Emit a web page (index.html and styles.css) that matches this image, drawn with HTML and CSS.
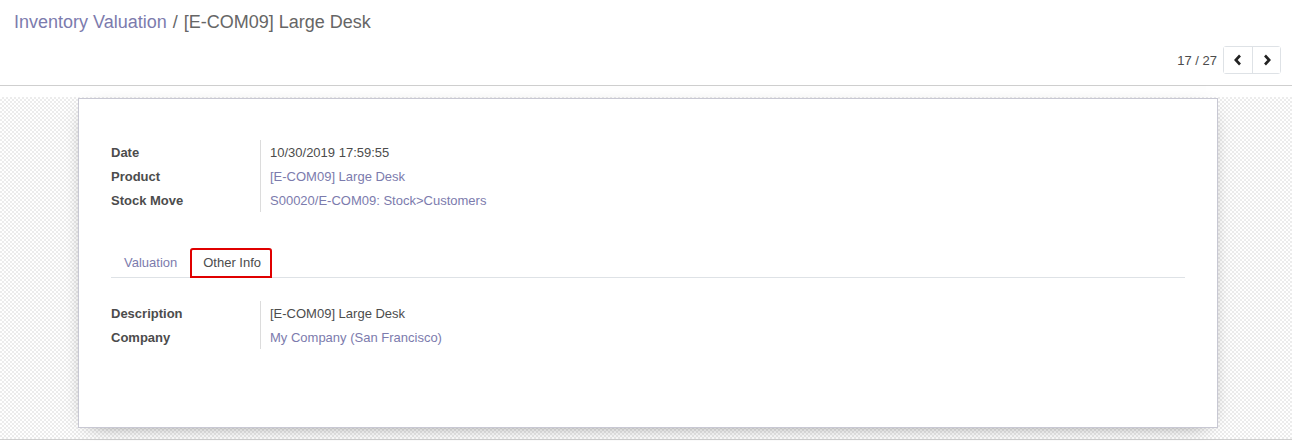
FILE: index.html
```html
<!DOCTYPE html>
<html>
<head>
<meta charset="utf-8">
<link rel="stylesheet" href="styles.css">
</head>
<body>
<div class="control-panel">
  <div class="breadcrumb">
    <a class="crumb-link">Inventory Valuation</a>
    <span class="crumb-sep">/</span>
    <span class="crumb-active">[E-COM09] Large Desk</span>
  </div>
  <div class="cp-bottom">
    <div class="pager">
      <span class="pager-value">17 / 27</span>
      <div class="pager-buttons">
        <button class="pager-btn" aria-label="Previous">
          <svg width="10" height="12" viewBox="0 0 10 12"><path d="M7 1.5 L2.8 6 L7 10.5" fill="none" stroke="#222" stroke-width="2.6" stroke-linejoin="miter"/></svg>
        </button>
        <button class="pager-btn" aria-label="Next">
          <svg width="10" height="12" viewBox="0 0 10 12"><path d="M3 1.5 L7.2 6 L3 10.5" fill="none" stroke="#222" stroke-width="2.6" stroke-linejoin="miter"/></svg>
        </button>
      </div>
    </div>
  </div>
</div>
<div class="spacer"></div>
<div class="sheet-bg">
  <div class="sheet">
    <div class="group">
      <div class="row"><div class="label">Date</div><div class="value">10/30/2019 17:59:55</div></div>
      <div class="row"><div class="label">Product</div><div class="value link">[E-COM09] Large Desk</div></div>
      <div class="row"><div class="label">Stock Move</div><div class="value link">S00020/E-COM09: Stock&gt;Customers</div></div>
    </div>
    <div class="tabs">
      <div class="tab">Valuation</div>
      <div class="tab active">Other Info</div>
    </div>
    <div class="group group-tab">
      <div class="row"><div class="label">Description</div><div class="value">[E-COM09] Large Desk</div></div>
      <div class="row"><div class="label">Company</div><div class="value link">My Company (San Francisco)</div></div>
    </div>
  </div>
</div>
</body>
</html>
```

FILE: styles.css
```css
html, body {
  margin: 0;
  padding: 0;
  background: #fff;
}
body {
  font-family: "Liberation Sans", Arial, sans-serif;
  font-size: 13px;
  color: #4c4c4c;
  height: 441px;
  overflow: hidden;
}
.control-panel {
  box-sizing: border-box;
  height: 86px;
  border-bottom: 1px solid #cfcfcf;
  padding: 9px 11px 0 14px;
  display: flex;
  flex-direction: column;
}
.breadcrumb {
  font-size: 18px;
  line-height: 26px;
  display: flex;
  gap: 6px;
}
.crumb-link { color: #7c7bad; }
.crumb-sep, .crumb-active { color: #666; }
.cp-bottom {
  display: flex;
  justify-content: flex-end;
  margin-top: 11px;
}
.pager {
  display: flex;
  align-items: center;
  gap: 6px;
}
.pager-value {
  color: #4c4c4c;
  font-size: 13px;
}
.pager-buttons {
  display: flex;
  border: 1px solid #dee2e6;
  border-radius: 3px;
  height: 28px;
  box-sizing: border-box;
}
.pager-btn {
  width: 28px;
  height: 26px;
  border: none;
  background: #fff;
  padding: 0;
  display: flex;
  align-items: center;
  justify-content: center;
}
.pager-btn + .pager-btn {
  border-left: 1px solid #dee2e6;
}
.spacer { height: 11px; }
.sheet-bg {
  box-sizing: border-box;
  height: 343px;
  border-bottom: 1px solid #cfcfcf;
  background-color: #fff;
  background-image: conic-gradient(#ececec 25%, #fff 0 50%, #ececec 0 75%, #fff 0);
  background-size: 4px 4px;
  padding: 1px 0 0 4px;
}
.sheet {
  box-sizing: border-box;
  width: 1140px;
  height: 330px;
  margin: 0 auto;
  background: #fff;
  border: 1px solid #c8c8d3;
  box-shadow: 0 5px 20px -12px rgba(0,0,0,0.7);
  padding: 41px 32px 0 32px;
}
.group {
  display: flex;
  flex-direction: column;
}
.row {
  display: flex;
  height: 24px;
  align-items: stretch;
}
.label {
  box-sizing: border-box;
  width: 150px;
  flex: none;
  font-weight: bold;
  border-right: 1px solid #dcdcdc;
  display: flex;
  align-items: center;
  color: #4c4c4c;
}
.value {
  padding-left: 9px;
  display: flex;
  align-items: center;
  color: #4c4c4c;
}
.value.link { color: #7c7bad; }
.tabs {
  margin-top: 36px;
  display: flex;
  border-bottom: 1px solid #dee2e6;
  height: 30px;
  box-sizing: border-box;
}
.tab {
  box-sizing: border-box;
  height: 29px;
  padding: 0 12px 2px 12px;
  display: flex;
  align-items: center;
  color: #7c7bad;
  border: 1px solid transparent;
  border-bottom: none;
}
.tab.active {
  color: #4c4c4c;
  background: #fff;
  border-color: #dee2e6;
  border-top-left-radius: 3px;
  border-top-right-radius: 3px;
  padding-right: 10px;
  height: 30px;
  margin-bottom: -1px;
  outline: 2px solid #e00000;
  outline-offset: -2px;
}
.group-tab {
  margin-top: 23px;
}
```
